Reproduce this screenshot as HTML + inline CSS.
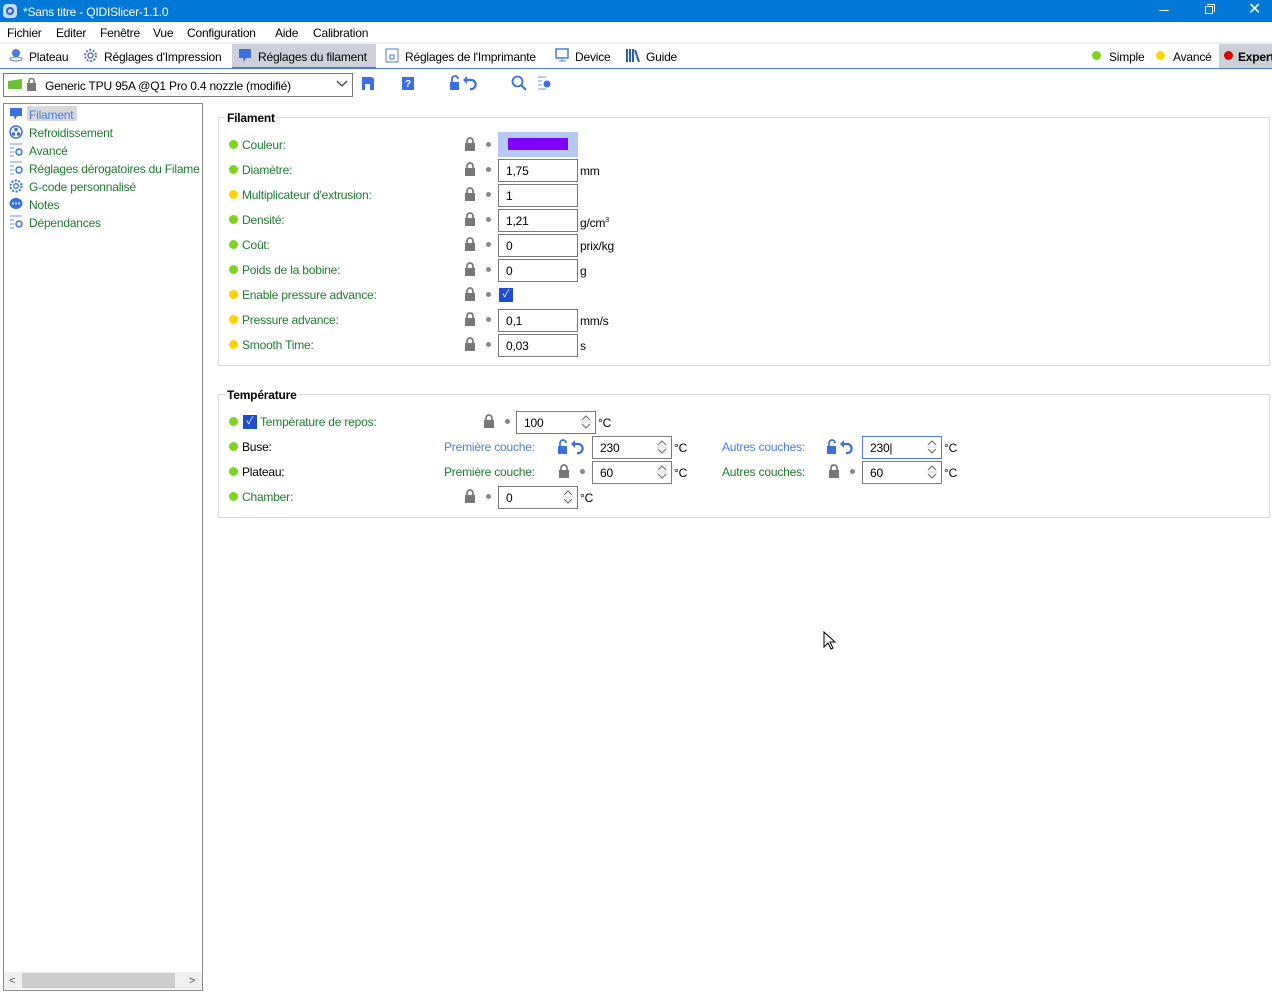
<!DOCTYPE html>
<html><head><meta charset="utf-8"><style>
*{margin:0;padding:0;box-sizing:border-box}
body{width:1272px;height:994px;background:#fff;position:relative;overflow:hidden;font-family:"Liberation Sans","Noto Sans CJK JP",sans-serif;font-size:12px;color:#000;letter-spacing:-0.2px}
.a{position:absolute;white-space:nowrap;line-height:14px}
.g{color:#1d7c2e}
.b{color:#4a7cf0}
.dot{position:absolute;width:9px;height:9px;border-radius:50%}
.gd{background:#7ed321}.yd{background:#ffd200}.rd{background:#e00000}
.gray{position:absolute;width:5px;height:5px;border-radius:50%;background:#888}
.in{position:absolute;height:23px;border:1px solid #7a7a7a;background:#fff;padding-left:7px;line-height:23px}
</style></head><body>

<!-- title bar -->
<div class="a" style="left:0;top:0;width:1272px;height:22px;background:#0078d7"></div>
<div class="a" style="left:3px;top:4px;width:14px;height:14px;border-radius:4px;background:#c8d8f8"></div>
<div class="a" style="left:6px;top:7px;width:8px;height:8px;border-radius:50%;border:2px solid #2a5fd0"></div>
<div class="a" style="left:23px;top:5px;color:#fff">*Sans titre - QIDISlicer-1.1.0</div>
<div class="a" style="left:1159px;top:10px;width:10px;height:1px;background:#fff"></div>
<div class="a" style="left:1205px;top:6px;width:8px;height:8px;border:1px solid #fff"></div>
<div class="a" style="left:1207px;top:4px;width:8px;height:8px;border-top:1px solid #fff;border-right:1px solid #fff"></div>
<div class="a" style="left:1248px;top:1px;color:#fff;font-size:16px;line-height:18px">✕</div>

<!-- menu -->
<div class="a" style="left:7px;top:26px">Fichier</div>
<div class="a" style="left:56px;top:26px">Editer</div>
<div class="a" style="left:100px;top:26px">Fenêtre</div>
<div class="a" style="left:153px;top:26px">Vue</div>
<div class="a" style="left:187px;top:26px">Configuration</div>
<div class="a" style="left:275px;top:26px">Aide</div>
<div class="a" style="left:313px;top:26px">Calibration</div>
<div class="a" style="left:0;top:42px;width:1272px;height:2px;background:#f0f0f0"></div>

<!-- tabs -->
<div class="a" style="left:232px;top:44px;width:144px;height:24px;background:#cdd0d8"></div>
<div class="a" style="left:1219px;top:44px;width:53px;height:24px;background:#cdd0d8"></div>
<div class="a" style="left:0;top:68px;width:1272px;height:1px;background:#4a7cd8"></div>
<div class="a" style="left:232px;top:67px;width:144px;height:2px;background:#4a7cd8"></div>
<svg class="a" style="left:9px;top:48px" width="14" height="14"><circle cx="7" cy="5" r="4" fill="#4a7cd8"/><ellipse cx="7" cy="11" rx="6" ry="2" fill="none" stroke="#4a7cd8"/></svg>
<div class="a" style="left:29px;top:50px">Plateau</div>
<svg class="a" style="left:83px;top:48px" width="15" height="15"><circle cx="7.5" cy="7.5" r="5.5" fill="none" stroke="#5a7ab0" stroke-width="2" stroke-dasharray="2 1.5"/><circle cx="7.5" cy="7.5" r="2.5" fill="none" stroke="#5a7ab0" stroke-width="1.5"/></svg>
<div class="a" style="left:104px;top:50px">Réglages d'Impression</div>
<svg class="a" style="left:238px;top:48px" width="14" height="15"><path d="M1 1h12v9h-5l-2 4-1-4H1z" fill="#3b6fe0"/></svg>
<div class="a" style="left:258px;top:50px">Réglages du filament</div>
<svg class="a" style="left:385px;top:48px" width="14" height="15"><rect x="1" y="1" width="12" height="13" fill="none" stroke="#4a7cd8"/><rect x="5" y="7" width="4" height="4" fill="none" stroke="#4a7cd8"/></svg>
<div class="a" style="left:405px;top:50px">Réglages de l'Imprimante</div>
<svg class="a" style="left:555px;top:48px" width="14" height="15"><rect x="1" y="1" width="12" height="9" fill="none" stroke="#4a7cd8" stroke-width="1.5"/><path d="M4 13h7M7 10v3" stroke="#4a7cd8"/></svg>
<div class="a" style="left:575px;top:50px">Device</div>
<svg class="a" style="left:626px;top:48px" width="14" height="14"><path d="M1 1v13M4 1v13M7 1v13M9 2l4 12" stroke="#2a5fb0" stroke-width="2"/></svg>
<div class="a" style="left:646px;top:50px">Guide</div>
<div class="dot gd" style="left:1092px;top:51px"></div><div class="a" style="left:1109px;top:50px">Simple</div>
<div class="dot yd" style="left:1156px;top:51px"></div><div class="a" style="left:1173px;top:50px">Avancé</div>
<div class="dot rd" style="left:1224px;top:51px"></div><div class="a" style="left:1238px;top:50px;font-weight:bold">Expert</div>

<!-- toolbar -->
<div class="a" style="left:3px;top:73px;width:350px;height:24px;border:1px solid #7a7a7a"></div>
<div class="a" style="left:8px;top:79px;width:14px;height:10px;background:#6cbf3a;clip-path:polygon(0 20%,100% 0,100% 100%,0 100%)"></div>
<svg class="a" style="left:26px;top:77px" width="11" height="14"><path d="M3 6V4a2.5 2.5 0 015 0v2" fill="none" stroke="#777" stroke-width="1.6"/><rect x="1" y="6" width="9" height="8" fill="#777"/></svg>
<div class="a" style="left:45px;top:79px">Generic TPU 95A @Q1 Pro 0.4 nozzle (modifié)</div>
<svg class="a" style="left:336px;top:80px" width="12" height="8"><path d="M1 1l5 5 5-5" fill="none" stroke="#444" stroke-width="1.3"/></svg>
<svg class="a" style="left:361px;top:76px" width="14" height="15"><path d="M1 1h10l2 2v11H1z" fill="#3b6fe0"/><rect x="4" y="8" width="5" height="6" fill="#fff"/></svg>
<svg class="a" style="left:401px;top:76px" width="14" height="15"><rect x="1" y="1" width="12" height="13" fill="#3b6fe0"/><text x="4" y="11" font-size="10" fill="#fff" font-family="Liberation Sans" font-weight="bold">?</text></svg>
<svg class="a" style="left:449px;top:75px" width="32" height="16"><path d="M3 7V4a3 3 0 016 0" fill="none" stroke="#3b6fe0" stroke-width="1.8"/><rect x="1" y="7" width="9" height="8" fill="#3b6fe0"/><path d="M17 5h6a4.5 4.5 0 11-2 9" fill="none" stroke="#3b6fe0" stroke-width="2.2"/><path d="M14 5l4-4v8z" fill="#3b6fe0"/></svg>
<svg class="a" style="left:511px;top:75px" width="16" height="16"><circle cx="6.5" cy="6.5" r="5" fill="none" stroke="#3b6fe0" stroke-width="1.8"/><path d="M10 10l5 5" stroke="#3b6fe0" stroke-width="2"/></svg>
<svg class="a" style="left:537px;top:76px" width="15" height="14"><path d="M1 1h8M1 5h4M1 9h4M1 13h8" stroke="#6f94e0"/><circle cx="10" cy="8" r="3.5" fill="#3b6fe0"/></svg>

<!-- left panel -->
<div class="a" style="left:3px;top:103px;width:200px;height:888px;border:1px solid #8a8a8a;overflow:hidden">
<div class="a" style="left:23px;top:2px;width:50px;height:15px;background:#d8d8d8"></div>
<svg class="a" style="left:5px;top:3px" width="14" height="14"><path d="M1 1h12v8H8l-2 4-1-4H1z" fill="#3b6fe0"/></svg>
<div class="a b" style="left:25px;top:4px">Filament</div>
<svg class="a" style="left:5px;top:21px" width="14" height="14"><circle cx="7" cy="7" r="6" fill="none" stroke="#3b6fe0" stroke-width="1.5"/><circle cx="7" cy="4.5" r="1.8" fill="#3b6fe0"/><circle cx="4.5" cy="9" r="1.8" fill="#3b6fe0"/><circle cx="9.5" cy="9" r="1.8" fill="#3b6fe0"/></svg>
<div class="a g" style="left:25px;top:22px">Refroidissement</div>
<svg class="a" style="left:5px;top:39px" width="14" height="14"><path d="M1 1h12M1 5h4M1 9h4M1 13h4" stroke="#6f94e0"/><circle cx="10" cy="9" r="3" fill="none" stroke="#3b6fe0" stroke-width="1.5"/></svg>
<div class="a g" style="left:25px;top:40px">Avancé</div>
<svg class="a" style="left:5px;top:57px" width="14" height="14"><path d="M1 1h12M1 5h4M1 9h4M1 13h4" stroke="#6f94e0"/><circle cx="10" cy="9" r="3" fill="none" stroke="#3b6fe0" stroke-width="1.5"/></svg>
<div class="a g" style="left:25px;top:58px">Réglages dérogatoires du Filame</div>
<svg class="a" style="left:5px;top:75px" width="14" height="14"><circle cx="7" cy="7" r="5.5" fill="none" stroke="#3b6fe0" stroke-width="2" stroke-dasharray="2 1.5"/><circle cx="7" cy="7" r="2.3" fill="none" stroke="#3b6fe0" stroke-width="1.3"/></svg>
<div class="a g" style="left:25px;top:76px">G-code personnalisé</div>
<svg class="a" style="left:5px;top:93px" width="14" height="14"><ellipse cx="7" cy="6.5" rx="6.5" ry="5.5" fill="#3b6fe0"/><circle cx="4" cy="6.5" r="1" fill="#fff"/><circle cx="7" cy="6.5" r="1" fill="#fff"/><circle cx="10" cy="6.5" r="1" fill="#fff"/></svg>
<div class="a g" style="left:25px;top:94px">Notes</div>
<svg class="a" style="left:5px;top:111px" width="14" height="14"><path d="M1 1h12M1 5h4M1 9h4M1 13h4" stroke="#6f94e0"/><circle cx="10" cy="9" r="3" fill="none" stroke="#3b6fe0" stroke-width="1.5"/></svg>
<div class="a g" style="left:25px;top:112px">Dépendances</div>
<div class="a" style="left:0;top:868px;width:198px;height:17px;background:#f0f0f0"></div>
<div class="a" style="left:18px;top:869px;width:153px;height:15px;background:#cdcdcd"></div>
<div class="a" style="left:5px;top:870px;color:#555;font-size:11px">&lt;</div>
<div class="a" style="left:185px;top:870px;color:#555;font-size:11px">&gt;</div>
</div>

<!-- Filament group -->
<div class="a" style="left:218px;top:117px;width:1052px;height:249px;border:1px solid #dcdcdc"></div>
<div class="a" style="left:225px;top:111px;background:#fff;padding:0 2px;font-weight:bold">Filament</div>

<div id="rows"></div>

<!-- Temperature group -->
<div class="a" style="left:218px;top:394px;width:1052px;height:124px;border:1px solid #dcdcdc"></div>
<div class="a" style="left:225px;top:388px;background:#fff;padding:0 2px;font-weight:bold">Température</div>

<!-- cursor -->
<svg class="a" style="left:823px;top:631px" width="13" height="20"><path d="M1 1v15l4-4 3 6 2-1-3-6h5z" fill="#fff" stroke="#000"/></svg>

<script>
var L='<svg width="12" height="14"><path d="M3 6V4a3 3 0 016 0v2" fill="none" stroke="#777" stroke-width="1.7"/><rect x="1" y="6" width="10" height="8" fill="#777"/></svg>';
var U='<svg width="30" height="16"><path d="M3 7V4a3 3 0 016 0" fill="none" stroke="#3b6fe0" stroke-width="1.7"/><rect x="1" y="7" width="9" height="8" fill="#3b6fe0"/><path d="M17 5h5a4.5 4.5 0 11-2 9" fill="none" stroke="#3b6fe0" stroke-width="2.2"/><path d="M14 5l4-4v8z" fill="#3b6fe0"/></svg>';
var h='';
function lk(x,y){h+='<div class="a" style="left:'+(x+1)+'px;top:'+(y-7)+'px">'+L+'</div><div class="gray" style="left:'+(x+23)+'px;top:'+(y-2)+'px"></div>';}
function un(x,y){h+='<div class="a" style="left:'+x+'px;top:'+(y-8)+'px">'+U+'</div>';}
function inp(x,y,w,v,spin,blue){h+='<div class="in" style="left:'+x+'px;top:'+(y-11)+'px;width:'+w+'px;'+(blue?'border-color:#4a7cf0':'')+'">'+v+'</div>';
 if(spin)h+='<svg class="a" style="left:'+(x+w-16)+'px;top:'+(y-9)+'px" width="12" height="18"><path d="M2 7l4-4 4 4M2 11l4 4 4-4" fill="none" stroke="#777" stroke-width="1.2"/><path d="M1 9h10" stroke="#ccc"/></svg>';}
function tx(x,y,t,c){h+='<div class="a '+(c||'')+'" style="left:'+x+'px;top:'+(y-6)+'px">'+t+'</div>';}
function dt(x,y,c){h+='<div class="dot '+c+'" style="left:'+x+'px;top:'+(y-4)+'px"></div>';}
var R=[['Couleur:','gd',null,''],['Diamètre:','gd','1,75','mm'],["Multiplicateur d'extrusion:",'yd','1',''],['Densité:','gd','1,21','g/cm<sup style="font-size:7px">3</sup>'],['Coût:','gd','0','prix/kg'],['Poids de la bobine:','gd','0','g'],['Enable pressure advance:','yd','chk',''],['Pressure advance:','yd','0,1','mm/s'],['Smooth Time:','yd','0,03','s']];
R.forEach(function(r,i){var y=144+25*i;dt(229,y,r[1]);tx(242,y,r[0],'g');lk(463,y);
 if(r[2]===null){h+='<div class="a" style="left:498px;top:'+(y-12)+'px;width:80px;height:25px;background:#b5c9f7"></div><div class="a" style="left:508px;top:'+(y-6)+'px;width:60px;height:12px;background:#8000ff"></div>';}
 else if(r[2]=='chk'){h+='<div class="a" style="left:499px;top:'+(y-6)+'px;width:14px;height:14px;background:#1f4fd0;color:#fff;font-size:10px;line-height:14px;text-align:center">✓</div>';}
 else{inp(498,y+1,80,r[2]);tx(580,y+1,r[3]);}
});
var y=421;dt(229,y,'gd');h+='<div class="a" style="left:243px;top:'+(y-6)+'px;width:14px;height:14px;background:#1f4fd0;color:#fff;font-size:10px;line-height:14px;text-align:center">✓</div>';tx(260,y,'Température de repos:','g');lk(482,y);inp(516,y+1,80,'100',1);tx(598,y+1,'°C');
y=446;dt(229,y,'gd');tx(242,y,'Buse:');tx(444,y,'Première couche:','b');un(557,y+1);inp(592,y+1,80,'230',1);tx(674,y+1,'°C');tx(722,y,'Autres couches:','b');un(826,y+1);inp(862,y+1,80,'230|',1,1);tx(944,y+1,'°C');
y=471;dt(229,y,'gd');tx(242,y,'Plateau:');tx(444,y,'Première couche:','g');lk(557,y);inp(592,y+1,80,'60',1);tx(674,y+1,'°C');tx(722,y,'Autres couches:','g');lk(827,y);inp(862,y+1,80,'60',1);tx(944,y+1,'°C');
y=496;dt(229,y,'gd');tx(242,y,'Chamber:','g');lk(463,y);inp(498,y+1,80,'0',1);tx(580,y+1,'°C');
document.getElementById('rows').outerHTML=h;
</script>
</body></html>
